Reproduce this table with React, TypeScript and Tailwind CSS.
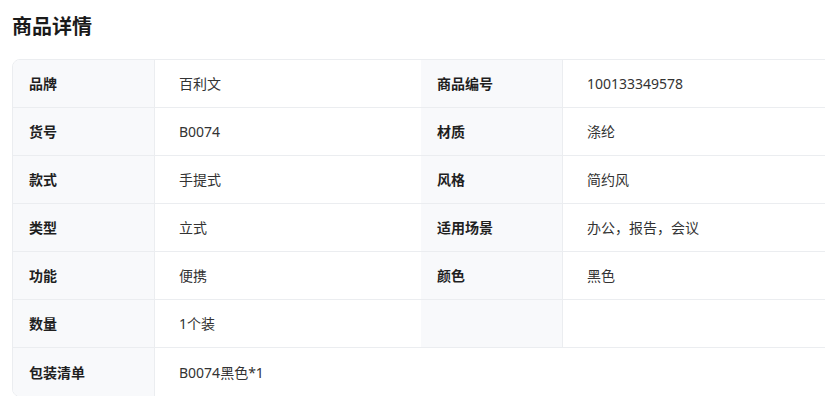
import React from "react";

type Cell = { label: string; value: string };

const rows: [Cell, Cell | null][] = [
  [{ label: "品牌", value: "百利文" }, { label: "商品编号", value: "100133349578" }],
  [{ label: "货号", value: "B0074" }, { label: "材质", value: "涤纶" }],
  [{ label: "款式", value: "手提式" }, { label: "风格", value: "简约风" }],
  [{ label: "类型", value: "立式" }, { label: "适用场景", value: "办公，报告，会议" }],
  [{ label: "功能", value: "便携" }, { label: "颜色", value: "黑色" }],
  [{ label: "数量", value: "1个装" }, null],
];

const font = { fontFamily: '"Noto Sans", "Noto Sans CJK SC", sans-serif' };

export default function App() {
  return (
    <div className="w-[825px] h-[396px] overflow-hidden bg-white px-3" style={font}>
      <h2 className="mt-[13px] text-[20px] leading-[28px] font-bold text-[#1a1a1a]">商品详情</h2>

      {/* spec table, wider than the viewport so the right edge is cut */}
      <div className="mt-[18px] w-[850px] rounded-lg border border-[#ebedf0] overflow-hidden text-[14px]">
        <div className="grid grid-cols-[142px_266px_142px_1fr]">
          {rows.map(([a, b], i) => (
            <React.Fragment key={i}>
              <div className="h-12 flex items-center pl-4 bg-[#f8f9fb] border-b border-r border-[#ebedf0] font-bold text-[#1f1f1f]">
                {a.label}
              </div>
              <div className="h-12 flex items-center pl-6 border-b border-[#ebedf0] text-[#333]">
                {a.value}
              </div>
              <div className="h-12 flex items-center pl-4 bg-[#f8f9fb] border-b border-r border-[#ebedf0] font-bold text-[#1f1f1f]">
                {b?.label}
              </div>
              <div className="h-12 flex items-center pl-6 border-b border-[#ebedf0] text-[#333]">
                {b?.value}
              </div>
            </React.Fragment>
          ))}
          <div className="h-12 flex items-center pl-4 bg-[#f8f9fb] border-r border-[#ebedf0] font-bold text-[#1f1f1f]">
            包装清单
          </div>
          <div className="col-span-3 h-12 flex items-center pl-6 text-[#333]">B0074黑色*1</div>
        </div>
      </div>
    </div>
  );
}
